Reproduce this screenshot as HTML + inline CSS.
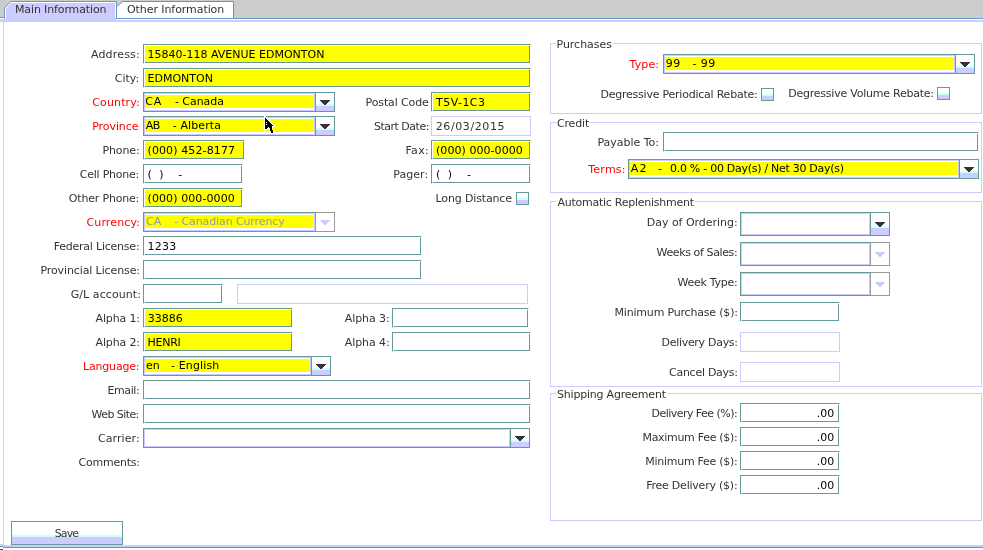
<!DOCTYPE html><html><head><meta charset="utf-8"><title>Supplier</title><style>html,body{margin:0;padding:0;background:#fff;}
body{width:983px;height:550px;position:relative;overflow:hidden;font-family:"DejaVu Sans","Liberation Sans",sans-serif;font-size:11px;line-height:13px;}
body>div,body>svg,#t>span{position:absolute;box-sizing:content-box;}
#t{left:0;top:0;width:983px;height:550px;will-change:transform;}
span{white-space:pre;display:block;height:13px;}
.tf{border:1px solid #669999;border-right-width:1px;}
.tf>i{position:absolute;left:1px;top:1px;right:0;bottom:0;}
.tf{background:#fff;}
.tf::before{content:"";position:absolute;right:-1px;top:0;width:1px;height:1px;background:#e0e0ff;box-shadow:1px -1px 0 #ccccff;}
.tf::after{content:"";position:absolute;left:0;bottom:-1px;width:1px;height:1px;background:#e0e0ff;box-shadow:-1px 1px 0 #ccccff;}
.df{border:1px solid #ccccff;background:#fff;}
.cb{border:1px solid #669999;border-right:none;background:#fff;box-shadow:inset 0 0 0 1px #ccccff;}
.cb>i{position:absolute;left:1px;top:2px;right:1px;bottom:3px;}
</style></head><body><div style="left:0px;top:0px;width:983px;height:18px;background:#cccccc;"></div><div style="left:0px;top:17px;width:4px;height:1px;background:#6699cc;"></div><div style="left:0px;top:18px;width:4px;height:1px;background:#fff;"></div><div style="left:0px;top:19px;width:983px;height:3px;background:#ccccff;"></div><div style="left:116px;top:18px;width:867px;height:1px;background:#6699cc;"></div><div style="left:116px;top:19px;width:867px;height:1px;background:#fff;"></div><svg style="left:0;top:0" width="240" height="22" viewBox="0 0 240 22">
<polygon points="4.5,21.5 4.5,7.5 10.5,1.5 116.5,1.5 116.5,21.5" fill="#ccccff"/>
<polygon points="117,18 117,6.5 122.5,1.5 233.5,1.5 233.5,18" fill="#ffffff"/>
<polyline points="116.5,7 122.5,1.5" fill="none" stroke="#6699cc" stroke-width="1"/>
<polyline points="122,1.5 233.5,1.5 233.5,18" fill="none" stroke="#669999" stroke-width="1"/>
<polyline points="5.5,19 5.5,7.9 10.9,2.5 115.5,2.5 115.5,18" fill="none" stroke="#ffffff" stroke-width="1"/>
<polyline points="4.5,19 4.5,7.5 10.5,1.5 116.5,1.5 116.5,19" fill="none" stroke="#6699cc" stroke-width="1"/>
<rect x="117" y="18" width="123" height="1" fill="#6699cc"/>
<rect x="5" y="19" width="111" height="3" fill="#ccccff"/>
</svg><div style="left:3px;top:19px;width:1px;height:528px;background:#ccccff;"></div><div style="left:3px;top:545px;width:980px;height:2px;background:#ccccff;"></div><div style="left:3px;top:547px;width:980px;height:1px;background:#669999;"></div><div style="left:0px;top:544px;width:3px;height:2px;background:#ccccff;"></div><div style="left:0px;top:546px;width:3px;height:1px;background:#669999;"></div><div style="left:0px;top:549px;width:1px;height:1px;background:#ff0000;"></div><div style="left:1px;top:549px;width:1px;height:1px;background:#00cc00;"></div><div style="left:2px;top:549px;width:1px;height:1px;background:#0000ff;"></div><div class="tf" style="left:143px;top:44px;width:385px;height:17px;"><i style="background:#ffff00"></i></div><div class="tf" style="left:143px;top:68px;width:385px;height:17px;"><i style="background:#ffff00"></i></div><div class="cb" style="left:143px;top:92px;width:171px;height:18px;"><i style="background:#ffff00"></i></div><div style="left:315px;top:92px;width:18px;height:18px;border:1px solid #669999;background:linear-gradient(#fff 0,#fff 11px,#ccffff 11px,#ccffff 13px,#ccccff 13px,#ccccff 100%)"></div><svg style="left:320px;top:100px" width="10" height="5" viewBox="0 0 10 5" shape-rendering="crispEdges"><path d="M0 0h10v1h-1v1h-1v1h-1v1h-1v1h-2v-1h-1v-1h-1v-1h-1v-1h-1z" fill="#333333"/></svg><div class="cb" style="left:143px;top:116px;width:171px;height:18px;"><i style="background:#ffff00"></i></div><div style="left:315px;top:116px;width:18px;height:18px;border:1px solid #669999;background:linear-gradient(#fff 0,#fff 11px,#ccffff 11px,#ccffff 13px,#ccccff 13px,#ccccff 100%)"></div><svg style="left:320px;top:124px" width="10" height="5" viewBox="0 0 10 5" shape-rendering="crispEdges"><path d="M0 0h10v1h-1v1h-1v1h-1v1h-1v1h-2v-1h-1v-1h-1v-1h-1v-1h-1z" fill="#333333"/></svg><div class="tf" style="left:143px;top:140px;width:99px;height:17px;"><i style="background:#ffff00"></i></div><div class="tf" style="left:143px;top:164px;width:97px;height:17px;"><i style="background:#ffffff"></i></div><div class="tf" style="left:143px;top:188px;width:97px;height:17px;"><i style="background:#ffff00"></i></div><div class="cb" style="left:143px;top:212px;width:171px;height:18px;"><i style="background:#ffff00"></i></div><div style="left:315px;top:212px;width:18px;height:18px;border:1px solid #999999;background:#ffffff"></div><svg style="left:320px;top:220px" width="10" height="5" viewBox="0 0 10 5" shape-rendering="crispEdges"><path d="M0 0h10v1h-1v1h-1v1h-1v1h-1v1h-2v-1h-1v-1h-1v-1h-1v-1h-1z" fill="#ccccff"/></svg><div class="tf" style="left:143px;top:236px;width:276px;height:17px;"><i style="background:#ffffff"></i></div><div class="tf" style="left:143px;top:260px;width:276px;height:17px;"><i style="background:#ffffff"></i></div><div class="tf" style="left:143px;top:284px;width:77px;height:17px;"><i style="background:#ffffff"></i></div><div class="df" style="left:237px;top:284px;width:289px;height:18px;"></div><div class="tf" style="left:143px;top:308px;width:147px;height:17px;"><i style="background:#ffff00"></i></div><div class="tf" style="left:143px;top:332px;width:147px;height:17px;"><i style="background:#ffff00"></i></div><div class="cb" style="left:143px;top:356px;width:167px;height:18px;"><i style="background:#ffff00"></i></div><div style="left:311px;top:356px;width:18px;height:18px;border:1px solid #669999;background:linear-gradient(#fff 0,#fff 11px,#ccffff 11px,#ccffff 13px,#ccccff 13px,#ccccff 100%)"></div><svg style="left:316px;top:364px" width="10" height="5" viewBox="0 0 10 5" shape-rendering="crispEdges"><path d="M0 0h10v1h-1v1h-1v1h-1v1h-1v1h-2v-1h-1v-1h-1v-1h-1v-1h-1z" fill="#333333"/></svg><div class="tf" style="left:143px;top:380px;width:385px;height:17px;"><i style="background:#ffffff"></i></div><div class="tf" style="left:143px;top:404px;width:385px;height:17px;"><i style="background:#ffffff"></i></div><div class="cb" style="left:143px;top:428px;width:366px;height:18px;"><i style="background:#ffffff"></i></div><div style="left:510px;top:428px;width:18px;height:18px;border:1px solid #669999;background:linear-gradient(#fff 0,#fff 11px,#ccffff 11px,#ccffff 13px,#ccccff 13px,#ccccff 100%)"></div><svg style="left:515px;top:436px" width="10" height="5" viewBox="0 0 10 5" shape-rendering="crispEdges"><path d="M0 0h10v1h-1v1h-1v1h-1v1h-1v1h-2v-1h-1v-1h-1v-1h-1v-1h-1z" fill="#333333"/></svg><div class="tf" style="left:431px;top:92px;width:97px;height:17px;"><i style="background:#ffff00"></i></div><div class="df" style="left:431px;top:116px;width:98px;height:18px;"></div><div class="tf" style="left:431px;top:140px;width:97px;height:17px;"><i style="background:#ffff00"></i></div><div class="tf" style="left:431px;top:164px;width:97px;height:17px;"><i style="background:#ffffff"></i></div><div style="left:516px;top:192px;width:11px;height:11px;border:1px solid #669999;background:linear-gradient(#fff 0,#fff 5px,#ccffff 5px,#ccffff 7px,#ccccff 7px,#ccccff 100%)"></div><div class="tf" style="left:392px;top:308px;width:134px;height:17px;"><i style="background:#ffffff"></i></div><div class="tf" style="left:392px;top:332px;width:136px;height:17px;"><i style="background:#ffffff"></i></div><div style="left:550px;top:43px;width:430px;height:69px;border:1px solid #ccccff"></div><div class="gap" style="left:556px;top:43px;width:57px;height:1px;background:#fff"></div><div class="cb" style="left:663px;top:54px;width:291px;height:18px;"><i style="background:#ffff00"></i></div><div style="left:955px;top:54px;width:18px;height:18px;border:1px solid #669999;background:linear-gradient(#fff 0,#fff 11px,#ccffff 11px,#ccffff 13px,#ccccff 13px,#ccccff 100%)"></div><svg style="left:960px;top:62px" width="10" height="5" viewBox="0 0 10 5" shape-rendering="crispEdges"><path d="M0 0h10v1h-1v1h-1v1h-1v1h-1v1h-2v-1h-1v-1h-1v-1h-1v-1h-1z" fill="#333333"/></svg><div style="left:761px;top:88px;width:11px;height:11px;border:1px solid #669999;background:linear-gradient(#fff 0,#fff 5px,#ccffff 5px,#ccffff 7px,#ccccff 7px,#ccccff 100%)"></div><div style="left:937px;top:87px;width:11px;height:11px;border:1px solid #669999;background:linear-gradient(#fff 0,#fff 5px,#ccffff 5px,#ccffff 7px,#ccccff 7px,#ccccff 100%)"></div><div style="left:550px;top:122px;width:430px;height:69px;border:1px solid #ccccff"></div><div class="gap" style="left:556px;top:122px;width:34px;height:1px;background:#fff"></div><div class="tf" style="left:663px;top:132px;width:313px;height:17px;"><i style="background:#ffffff"></i></div><div class="cb" style="left:628px;top:159px;width:330px;height:18px;"><i style="background:#ffff00"></i></div><div style="left:959px;top:159px;width:18px;height:18px;border:1px solid #669999;background:linear-gradient(#fff 0,#fff 11px,#ccffff 11px,#ccffff 13px,#ccccff 13px,#ccccff 100%)"></div><svg style="left:964px;top:167px" width="10" height="5" viewBox="0 0 10 5" shape-rendering="crispEdges"><path d="M0 0h10v1h-1v1h-1v1h-1v1h-1v1h-2v-1h-1v-1h-1v-1h-1v-1h-1z" fill="#333333"/></svg><div style="left:550px;top:201px;width:430px;height:184px;border:1px solid #ccccff"></div><div class="gap" style="left:556px;top:201px;width:139px;height:1px;background:#fff"></div><div class="cb" style="left:740px;top:212px;width:129px;height:22px;"><i style="background:#ffffff"></i></div><div style="left:870px;top:212px;width:18px;height:22px;border:1px solid #669999;background:linear-gradient(#fff 0,#fff 13px,#ccffff 13px,#ccffff 15px,#ccccff 15px,#ccccff 100%)"></div><svg style="left:875px;top:222px" width="10" height="5" viewBox="0 0 10 5" shape-rendering="crispEdges"><path d="M0 0h10v1h-1v1h-1v1h-1v1h-1v1h-2v-1h-1v-1h-1v-1h-1v-1h-1z" fill="#333333"/></svg><div class="cb" style="left:740px;top:242px;width:129px;height:22px;"><i style="background:#ffffff"></i></div><div style="left:870px;top:242px;width:18px;height:22px;border:1px solid #999999;background:#ffffff"></div><svg style="left:875px;top:252px" width="10" height="5" viewBox="0 0 10 5" shape-rendering="crispEdges"><path d="M0 0h10v1h-1v1h-1v1h-1v1h-1v1h-2v-1h-1v-1h-1v-1h-1v-1h-1z" fill="#ccccff"/></svg><div class="cb" style="left:740px;top:272px;width:129px;height:22px;"><i style="background:#ffffff"></i></div><div style="left:870px;top:272px;width:18px;height:22px;border:1px solid #999999;background:#ffffff"></div><svg style="left:875px;top:282px" width="10" height="5" viewBox="0 0 10 5" shape-rendering="crispEdges"><path d="M0 0h10v1h-1v1h-1v1h-1v1h-1v1h-2v-1h-1v-1h-1v-1h-1v-1h-1z" fill="#ccccff"/></svg><div class="tf" style="left:740px;top:302px;width:97px;height:17px;"><i style="background:#ffffff"></i></div><div class="df" style="left:740px;top:332px;width:98px;height:18px;"></div><div class="df" style="left:740px;top:362px;width:98px;height:18px;"></div><div style="left:550px;top:393px;width:430px;height:126px;border:1px solid #ccccff"></div><div class="gap" style="left:556px;top:393px;width:111px;height:1px;background:#fff"></div><div class="tf" style="left:740px;top:403px;width:97px;height:17px;"><i style="background:#ffffff"></i></div><div class="tf" style="left:740px;top:427px;width:97px;height:17px;"><i style="background:#ffffff"></i></div><div class="tf" style="left:740px;top:451px;width:97px;height:17px;"><i style="background:#ffffff"></i></div><div class="tf" style="left:740px;top:475px;width:97px;height:17px;"><i style="background:#ffffff"></i></div><div style="left:11px;top:521px;width:110px;height:22px;border:1px solid #669999;background:linear-gradient(#fff 0,#fff 13px,#ccffff 13px,#ccffff 15px,#ccccff 15px,#ccccff 100%)"></div><svg style="left:262px;top:114px;z-index:5" width="16" height="22" viewBox="0 0 16 22" shape-rendering="crispEdges"><rect x="2" y="2" width="1" height="1" fill="#fff"/><rect x="2" y="3" width="1" height="1" fill="#fff"/><rect x="2" y="4" width="1" height="1" fill="#fff"/><rect x="2" y="5" width="1" height="1" fill="#fff"/><rect x="2" y="6" width="1" height="1" fill="#fff"/><rect x="2" y="7" width="1" height="1" fill="#fff"/><rect x="2" y="8" width="1" height="1" fill="#fff"/><rect x="2" y="9" width="1" height="1" fill="#fff"/><rect x="2" y="10" width="1" height="1" fill="#fff"/><rect x="2" y="11" width="1" height="1" fill="#fff"/><rect x="2" y="12" width="1" height="1" fill="#fff"/><rect x="2" y="13" width="1" height="1" fill="#fff"/><rect x="2" y="14" width="1" height="1" fill="#fff"/><rect x="2" y="15" width="1" height="1" fill="#fff"/><rect x="2" y="16" width="1" height="1" fill="#fff"/><rect x="3" y="2" width="1" height="1" fill="#fff"/><rect x="3" y="3" width="1" height="1" fill="#fff"/><rect x="3" y="15" width="1" height="1" fill="#fff"/><rect x="3" y="16" width="1" height="1" fill="#fff"/><rect x="4" y="3" width="1" height="1" fill="#fff"/><rect x="4" y="4" width="1" height="1" fill="#fff"/><rect x="4" y="15" width="1" height="1" fill="#fff"/><rect x="5" y="5" width="1" height="1" fill="#fff"/><rect x="5" y="14" width="1" height="1" fill="#fff"/><rect x="6" y="6" width="1" height="1" fill="#fff"/><rect x="6" y="13" width="1" height="1" fill="#fff"/><rect x="6" y="14" width="1" height="1" fill="#fff"/><rect x="7" y="7" width="1" height="1" fill="#fff"/><rect x="7" y="14" width="1" height="1" fill="#fff"/><rect x="7" y="15" width="1" height="1" fill="#fff"/><rect x="7" y="16" width="1" height="1" fill="#fff"/><rect x="8" y="8" width="1" height="1" fill="#fff"/><rect x="8" y="17" width="1" height="1" fill="#fff"/><rect x="8" y="18" width="1" height="1" fill="#fff"/><rect x="9" y="9" width="1" height="1" fill="#fff"/><rect x="10" y="10" width="1" height="1" fill="#fff"/><rect x="10" y="12" width="1" height="1" fill="#fff"/><rect x="10" y="13" width="1" height="1" fill="#fff"/><rect x="10" y="15" width="1" height="1" fill="#fff"/><rect x="11" y="11" width="1" height="1" fill="#fff"/><rect x="11" y="12" width="1" height="1" fill="#fff"/><rect x="11" y="16" width="1" height="1" fill="#fff"/><rect x="11" y="17" width="1" height="1" fill="#fff"/><rect x="11" y="18" width="1" height="1" fill="#fff"/><rect x="12" y="11" width="1" height="1" fill="#fff"/><rect x="12" y="12" width="1" height="1" fill="#fff"/><rect x="13" y="12" width="1" height="1" fill="#fff"/><rect x="3" y="4" width="1" height="1" fill="#000"/><rect x="3" y="5" width="2" height="1" fill="#000"/><rect x="3" y="6" width="3" height="1" fill="#000"/><rect x="3" y="7" width="4" height="1" fill="#000"/><rect x="3" y="8" width="5" height="1" fill="#000"/><rect x="3" y="9" width="6" height="1" fill="#000"/><rect x="3" y="10" width="7" height="1" fill="#000"/><rect x="3" y="11" width="8" height="1" fill="#000"/><rect x="3" y="12" width="7" height="1" fill="#000"/><rect x="3" y="13" width="3" height="1" fill="#000"/><rect x="7" y="13" width="3" height="1" fill="#000"/><rect x="3" y="14" width="2" height="1" fill="#000"/><rect x="8" y="14" width="2" height="1" fill="#000"/><rect x="8" y="15" width="2" height="1" fill="#000"/><rect x="8" y="16" width="3" height="1" fill="#000"/><rect x="9" y="17" width="2" height="1" fill="#000"/><rect x="9" y="18" width="2" height="1" fill="#000"/><rect x="4" y="8" width="1" height="1" fill="#fff"/><rect x="4" y="10" width="1" height="1" fill="#fff"/></svg><div id="t"><span style="left:15.00px;top:3px;color:#333333;letter-spacing:-0.129px;">Main Information</span><span style="left:127.00px;top:3px;color:#333333;letter-spacing:-0.072px;">Other Information</span><span style="left:90.95px;top:48px;color:#333333;letter-spacing:0.176px;">Address:</span><span style="left:114.80px;top:72px;color:#333333;letter-spacing:0.008px;">City:</span><span style="left:92.15px;top:96px;color:#ff0000;letter-spacing:0.163px;">Country:</span><span style="left:92.25px;top:120px;color:#ff0000;letter-spacing:-0.080px;">Province</span><span style="left:102.45px;top:144px;color:#333333;letter-spacing:-0.106px;">Phone:</span><span style="left:79.80px;top:168px;color:#333333;letter-spacing:-0.234px;">Cell Phone:</span><span style="left:68.80px;top:192px;color:#333333;letter-spacing:-0.183px;">Other Phone:</span><span style="left:86.50px;top:216px;color:#ff0000;letter-spacing:0.129px;">Currency:</span><span style="left:53.65px;top:240px;color:#333333;letter-spacing:-0.217px;">Federal License:</span><span style="left:40.50px;top:264px;color:#333333;letter-spacing:-0.115px;">Provincial License:</span><span style="left:70.65px;top:288px;color:#333333;letter-spacing:0.078px;">G/L account:</span><span style="left:95.50px;top:312px;color:#333333;letter-spacing:-0.141px;">Alpha 1:</span><span style="left:95.50px;top:336px;color:#333333;letter-spacing:-0.141px;">Alpha 2:</span><span style="left:83.05px;top:360px;color:#ff0000;letter-spacing:-0.187px;">Language:</span><span style="left:107.45px;top:384px;color:#333333;letter-spacing:-0.397px;">Email:</span><span style="left:91.55px;top:408px;color:#333333;letter-spacing:-0.570px;">Web Site:</span><span style="left:97.95px;top:432px;color:#333333;letter-spacing:0.087px;">Carrier:</span><span style="left:78.50px;top:456px;color:#333333;letter-spacing:-0.230px;">Comments:</span><span style="left:147.50px;top:48px;color:#000000;">15840-118 AVENUE EDMONTON</span><span style="left:147.50px;top:72px;color:#000000;">EDMONTON</span><span style="left:145.25px;top:95px;color:#000000;letter-spacing:0.781px;">CA</span><span style="left:175.00px;top:95px;color:#000000;letter-spacing:-0.047px;">- Canada</span><span style="left:145.75px;top:119px;color:#000000;letter-spacing:-0.578px;">AB</span><span style="left:172.75px;top:119px;color:#000000;letter-spacing:0.109px;">- Alberta</span><span style="left:147.50px;top:144px;color:#000000;letter-spacing:0.112px;">(000) 452-8177</span><span style="left:147.50px;top:168px;color:#000000;letter-spacing:0.150px;">(  )    -</span><span style="left:147.50px;top:192px;color:#000000;letter-spacing:0.093px;">(000) 000-0000</span><span style="left:146.00px;top:215px;color:#999999;letter-spacing:0.031px;">CA</span><span style="left:174.25px;top:215px;color:#999999;letter-spacing:-0.106px;">- Canadian Currency</span><span style="left:147.50px;top:240px;color:#000000;letter-spacing:0.250px;">1233</span><span style="left:147.75px;top:312px;color:#000000;">33886</span><span style="left:147.50px;top:336px;color:#000000;letter-spacing:-0.273px;">HENRI</span><span style="left:146.00px;top:359px;color:#000000;">en</span><span style="left:171.00px;top:359px;color:#000000;letter-spacing:0.133px;">- English</span><span style="left:365.60px;top:96px;color:#333333;letter-spacing:-0.123px;">Postal Code</span><span style="left:373.90px;top:120px;color:#333333;letter-spacing:-0.487px;">Start Date:</span><span style="left:405.45px;top:144px;color:#333333;letter-spacing:0.323px;">Fax:</span><span style="left:393.20px;top:168px;color:#333333;letter-spacing:0.066px;">Pager:</span><span style="left:435.50px;top:192px;color:#333333;letter-spacing:-0.143px;">Long Distance</span><span style="left:436.00px;top:96px;color:#000000;letter-spacing:0.458px;">T5V-1C3</span><span style="left:435.75px;top:120px;color:#333333;letter-spacing:0.594px;">26/03/2015</span><span style="left:436.00px;top:144px;color:#000000;letter-spacing:0.054px;">(000) 000-0000</span><span style="left:436.00px;top:168px;color:#000000;letter-spacing:0.182px;">(  )    -</span><span style="left:344.85px;top:312px;color:#333333;letter-spacing:-0.105px;">Alpha 3:</span><span style="left:344.85px;top:336px;color:#333333;letter-spacing:-0.105px;">Alpha 4:</span><span style="left:556.50px;top:38px;color:#333333;letter-spacing:-0.023px;">Purchases</span><span style="left:629.55px;top:58px;color:#ff0000;letter-spacing:0.129px;">Type:</span><span style="left:665.75px;top:57px;color:#000000;letter-spacing:0.500px;">99</span><span style="left:692.50px;top:57px;color:#000000;letter-spacing:0.427px;">- 99</span><span style="left:600.50px;top:88px;color:#333333;letter-spacing:-0.230px;">Degressive Periodical Rebate:</span><span style="left:788.25px;top:87px;color:#333333;letter-spacing:-0.236px;">Degressive Volume Rebate:</span><span style="left:557.00px;top:117px;color:#333333;letter-spacing:-0.169px;">Credit</span><span style="left:597.40px;top:136px;color:#333333;letter-spacing:-0.023px;">Payable To:</span><span style="left:588.25px;top:163px;color:#ff0000;letter-spacing:0.228px;">Terms:</span><span style="left:630.75px;top:162px;color:#000000;letter-spacing:1.219px;">A2</span><span style="left:658.00px;top:162px;color:#000000;">-</span><span style="left:670.00px;top:162px;color:#000000;letter-spacing:-0.280px;">0.0 % - 00 Day(s) / Net 30 Day(s)</span><span style="left:557.50px;top:196px;color:#333333;letter-spacing:-0.256px;">Automatic Replenishment</span><span style="left:646.85px;top:216px;color:#333333;letter-spacing:-0.036px;">Day of Ordering:</span><span style="left:656.60px;top:246px;color:#333333;letter-spacing:-0.390px;">Weeks of Sales:</span><span style="left:677.60px;top:276px;color:#333333;letter-spacing:-0.290px;">Week Type:</span><span style="left:614.50px;top:306px;color:#333333;letter-spacing:-0.186px;">Minimum Purchase ($):</span><span style="left:661.50px;top:336px;color:#333333;letter-spacing:-0.294px;">Delivery Days:</span><span style="left:669.00px;top:366px;color:#333333;letter-spacing:-0.266px;">Cancel Days:</span><span style="left:557.00px;top:388px;color:#333333;letter-spacing:-0.210px;">Shipping Agreement</span><span style="left:651.45px;top:407px;color:#333333;letter-spacing:-0.525px;">Delivery Fee (%):</span><span style="left:816.75px;top:407px;color:#000000;">.00</span><span style="left:642.45px;top:431px;color:#333333;letter-spacing:-0.300px;">Maximum Fee ($):</span><span style="left:816.75px;top:431px;color:#000000;">.00</span><span style="left:645.25px;top:455px;color:#333333;letter-spacing:-0.269px;">Minimum Fee ($):</span><span style="left:816.75px;top:455px;color:#000000;">.00</span><span style="left:646.15px;top:479px;color:#333333;letter-spacing:-0.223px;">Free Delivery ($):</span><span style="left:816.75px;top:479px;color:#000000;">.00</span><span style="left:54.75px;top:527px;color:#333333;letter-spacing:-0.922px;">Save</span></div></body></html>
